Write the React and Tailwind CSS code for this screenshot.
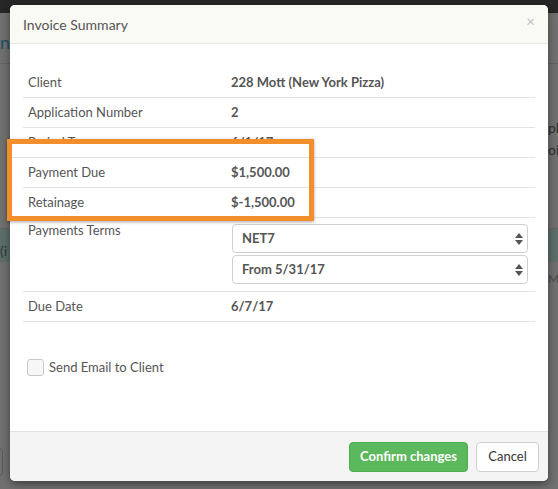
const font = { fontFamily: "Lato, 'Open Sans', sans-serif" };

function Row({ label, value, hidden }) {
  return (
    <div className="flex h-[30px] items-center border-b border-[#e3e3e3] text-[13px]">
      <div className={hidden ? "invisible w-[208px] pl-[5px]" : "w-[208px] pl-[5px] text-[#555]"}>{label}</div>
      <div className={hidden ? "invisible font-bold" : "font-bold text-[#555]"}>{value}</div>
    </div>
  );
}

function Arrows() {
  return (
    <svg width="8" height="12" viewBox="0 0 8 12">
      <path d="M4 0 L8 5 L0 5 Z" fill="#555" />
      <path d="M4 12 L8 7 L0 7 Z" fill="#555" />
    </svg>
  );
}

function SelectBox({ value }) {
  return (
    <div className="flex h-[29px] w-[296px] items-center justify-between rounded-[4px] border border-[#cfcfcf] bg-white pl-[9px] pr-[4px] text-[13px] font-bold text-[#555]">
      <span>{value}</span>
      <Arrows />
    </div>
  );
}

export default function App() {
  return (
    <div className="relative h-[489px] w-[558px] overflow-hidden bg-[#707070]" style={font}>
      {/* dimmed page behind */}
      <div className="h-[13px] bg-[#262626]" />
      <div className="pt-[16px] text-[18px] text-[#1f4f63]">ng</div>
      <div className="mt-[7px] h-px bg-[#636363]" />
      <div className="absolute right-0 top-[117px] w-[10px] text-[14px] leading-[22px] text-[#2e2e2e]">
        <div>pl</div>
        <div>oi</div>
      </div>
      <div className="absolute left-0 top-[228px] h-[34px] w-full border-t border-[#646464] bg-[#5d6e6a]" />
      <div className="absolute left-0 top-[240px] text-[14px] text-[#2f3a38]">(i</div>
      <div className="absolute right-0 top-[270px] w-[10px] overflow-hidden text-[12px] text-[#4a4a4a]">M</div>
      <div className="absolute left-[-6px] top-[448px] h-[28px] w-[9px] rounded-[4px] border border-[#5a5a5a]" />

      {/* modal */}
      <div className="absolute left-[10px] top-[5px] flex h-[476px] w-[538px] flex-col overflow-hidden rounded-[5px] bg-white shadow-[0_3px_8px_rgba(0,0,0,0.45)]">
        <div className="flex h-[39px] items-center justify-between border-b border-[#e8e8e3] bg-[#fafaf4] pl-[13px] pr-[13px]">
          <span className="text-[14px] text-[#555]">Invoice Summary</span>
          <span className="-mt-[6px] text-[15px] leading-none text-[#c2c2c2]">×</span>
        </div>

        <div className="flex-1 px-[13px] pt-[24px]">
          <Row label="Client" value="228 Mott (New York Pizza)" />
          <Row label="Application Number" value="2" />
          <Row label="Period To" value="6/1/17" />
          <Row label="Payment Due" value="$1,500.00" hidden />
          <Row label="Retainage" value="$-1,500.00" hidden />
          <div className="flex border-b border-[#e3e3e3] pb-[7px] pt-[6px] text-[13px]">
            <div className="-mt-[3px] w-[208px] pl-[5px] text-[#555]">Payments Terms</div>
            <div className="flex flex-col gap-[2px] pl-[1px]">
              <SelectBox value="NET7" />
              <SelectBox value="From 5/31/17" />
            </div>
          </div>
          <Row label="Due Date" value="6/7/17" />

          <label className="mt-[36px] flex items-center gap-[5px] pl-[4px] text-[13px] text-[#555]">
            <span className="h-[17px] w-[17px] rounded-[3px] border border-[#c8c8c8] bg-[#f7f7f7]" />
            Send Email to Client
          </label>
        </div>

        <div className="flex h-[50px] items-center justify-end gap-[8px] border-t border-[#e2e2e2] bg-[#f4f4f4] pr-[9px]">
          <button className="h-[30px] w-[119px] rounded-[4px] border border-[#4cae4c] bg-[#5cb85c] text-[13px] font-bold text-white">
            Confirm changes
          </button>
          <button className="h-[30px] w-[63px] rounded-[4px] border border-[#cfcfcf] bg-white text-[13px] text-[#333]">
            Cancel
          </button>
        </div>
      </div>

      {/* orange highlight callout */}
      <div className="absolute left-[7px] top-[139px] h-[82px] w-[307px] border-[5px] border-[#f28f2c] bg-white pl-[11px] pt-[13px] shadow-[0_1px_3px_rgba(0,0,0,0.35)]">
        <div className="-ml-[11px] border-b border-[#e3e3e3]" />
        <div className="flex h-[30px] items-center border-b border-[#e3e3e3] text-[13px]">
          <div className="w-[208px] pl-[5px] text-[#555]">Payment Due</div>
          <div className="font-bold text-[#555]">$1,500.00</div>
        </div>
        <div className="flex h-[30px] items-center text-[13px]">
          <div className="w-[208px] pl-[5px] text-[#555]">Retainage</div>
          <div className="font-bold text-[#555]">$-1,500.00</div>
        </div>
      </div>
    </div>
  );
}
